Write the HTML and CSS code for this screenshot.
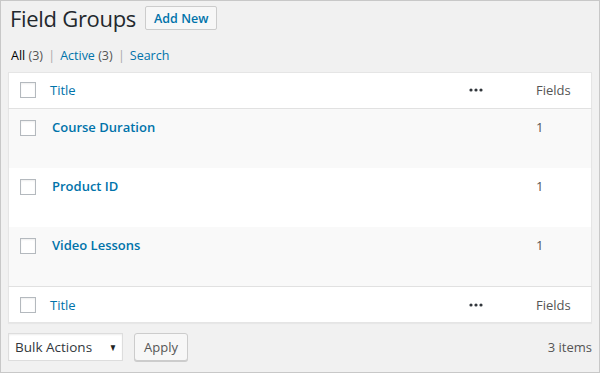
FILE: index.html
```html
<!DOCTYPE html>
<html lang="en">

<head>
    <meta charset="UTF-8">
    <meta name="viewport" content="width=device-width, initial-scale=1.0">
    <title>Field Groups</title>
    <link rel="stylesheet" href="styles.css">
</head>

<body>
    <div class="wrap">
        <div class="page-head">
            <h1 class="page-title">Field Groups</h1>
            <a class="add-new" href="#">Add New</a>
        </div>

        <ul class="subsubsub">
            <li><a class="current" href="#">All <span class="count">(3)</span></a> <span class="sep">|</span></li>
            <li><a href="#">Active <span class="count">(3)</span></a> <span class="sep">|</span></li>
            <li><a href="#">Search</a></li>
        </ul>

        <table class="list-table">
            <thead>
                <tr>
                    <td class="col-cb"><span class="cb"></span></td>
                    <th class="col-title"><a href="#">Title</a></th>
                    <th class="col-more">
                        <svg class="dots" width="14" height="4" viewBox="0 0 14 4">
                            <circle cx="2" cy="2" r="1.6" />
                            <circle cx="7" cy="2" r="1.6" />
                            <circle cx="12" cy="2" r="1.6" />
                        </svg>
                    </th>
                    <th class="col-fields">Fields</th>
                </tr>
            </thead>
            <tbody>
                <tr class="alt">
                    <td class="col-cb"><span class="cb"></span></td>
                    <td class="col-title"><a class="row-title" href="#">Course Duration</a></td>
                    <td class="col-more"></td>
                    <td class="col-fields">1</td>
                </tr>
                <tr>
                    <td class="col-cb"><span class="cb"></span></td>
                    <td class="col-title"><a class="row-title" href="#">Product ID</a></td>
                    <td class="col-more"></td>
                    <td class="col-fields">1</td>
                </tr>
                <tr class="alt last">
                    <td class="col-cb"><span class="cb"></span></td>
                    <td class="col-title"><a class="row-title" href="#">Video Lessons</a></td>
                    <td class="col-more"></td>
                    <td class="col-fields">1</td>
                </tr>
            </tbody>
            <tfoot>
                <tr>
                    <td class="col-cb"><span class="cb"></span></td>
                    <th class="col-title"><a href="#">Title</a></th>
                    <th class="col-more">
                        <svg class="dots" width="14" height="4" viewBox="0 0 14 4">
                            <circle cx="2" cy="2" r="1.6" />
                            <circle cx="7" cy="2" r="1.6" />
                            <circle cx="12" cy="2" r="1.6" />
                        </svg>
                    </th>
                    <th class="col-fields">Fields</th>
                </tr>
            </tfoot>
        </table>

        <div class="tablenav">
            <div class="bulk">
                <div class="select">Bulk Actions <span class="caret">&#9660;</span></div>
                <button class="apply" type="button">Apply</button>
            </div>
            <div class="num-items">3 items</div>
        </div>
    </div>
</body>

</html>
```

FILE: styles.css
```css
html,
body {
    height: 100%;
}

body {
    margin: 0;
    font-family: 'Open Sans', sans-serif;
    font-size: 13px;
    color: #444;
    background-color: #f1f1f1;
    box-sizing: border-box;
    border: 1px solid #c8c8c8;
}

a {
    color: #0073aa;
    text-decoration: none;
}

.wrap {
    padding: 0 7px 0 7px;
}

.page-head {
    display: flex;
    align-items: center;
    gap: 9px;
    padding-top: 4px;
}

.page-title {
    margin: 0 0 0 2px;
    font-size: 22px;
    font-weight: 400;
    color: #23282d;
    line-height: 26px;
    letter-spacing: -0.3px;
}

.add-new {
    display: inline-block;
    padding: 0 8px;
    height: 24px;
    line-height: 23px;
    box-sizing: border-box;
    border: 1px solid #ccc;
    border-radius: 2px;
    background: #f7f7f7;
    font-size: 12.5px;
    font-weight: 600;
}

.subsubsub {
    list-style: none;
    margin: 16px 0 0 3px;
    padding: 0;
    display: flex;
    gap: 5px;
    font-size: 12.5px;
    line-height: 18px;
}

.subsubsub .current {
    color: #000;
}

.count {
    color: #555;
}

.sep {
    color: #aaa;
    margin-left: 2px;
}

.list-table {
    width: 100%;
    margin-top: 7px;
    border-collapse: collapse;
    background: #fff;
    border: 1px solid #e5e5e5;
    box-shadow: 0 1px 1px rgba(0, 0, 0, 0.04);
}

.list-table th,
.list-table td {
    text-align: left;
    font-weight: 400;
    padding: 0;
    vertical-align: top;
}

.list-table thead tr,
.list-table tfoot tr {
    height: 36px;
}

.list-table thead th,
.list-table thead td {
    border-bottom: 1px solid #e1e1e1;
    vertical-align: middle;
    padding-bottom: 2px;
}

.list-table tfoot th,
.list-table tfoot td {
    border-top: 1px solid #e1e1e1;
    vertical-align: middle;
    padding-top: 1px;
}

.list-table tbody tr {
    height: 59px;
}

.list-table tbody tr.last {
    height: 60px;
}

.list-table tbody tr.alt {
    background: #f9f9f9;
}

.list-table .col-cb {
    width: 30px;
    padding-left: 11px;
}

.list-table tbody .col-cb {
    padding-top: 11px;
}

.cb {
    display: block;
    width: 16px;
    height: 16px;
    box-sizing: border-box;
    border: 1px solid #b4b9be;
    background: #fff;
    box-shadow: inset 0 1px 2px rgba(0, 0, 0, 0.07);
}

.list-table tbody td.col-title,
.list-table tbody td.col-fields {
    padding-top: 9px;
}

.row-title {
    font-size: 13px;
    font-weight: 600;
    margin-left: 2px;
}

.col-more {
    width: 68px;
}

.dots {
    display: block;
    fill: #32373c;
    margin-left: 1px;
}

.list-table .col-fields {
    width: 55px;
    color: #555;
}

.tablenav {
    display: flex;
    justify-content: space-between;
    align-items: center;
    margin-top: 10px;
}

.bulk {
    display: flex;
    gap: 11px;
}

.select {
    display: flex;
    justify-content: space-between;
    align-items: center;
    width: 115px;
    height: 28px;
    box-sizing: border-box;
    padding: 0 4px 0 6px;
    background: #fff;
    border: 1px solid #ddd;
    color: #32373c;
    font-size: 13.5px;
    box-shadow: inset 0 1px 2px rgba(0, 0, 0, 0.07);
}

.caret {
    font-size: 10px;
    color: #222;
    transform: scaleX(0.8);
}

.apply {
    height: 28px;
    padding: 0 9px;
    font-family: 'Open Sans', sans-serif;
    font-size: 13px;
    color: #555;
    background: #f7f7f7;
    border: 1px solid #ccc;
    border-radius: 3px;
    box-shadow: 0 1px 0 #ccc;
}

.num-items {
    color: #555;
}
```
